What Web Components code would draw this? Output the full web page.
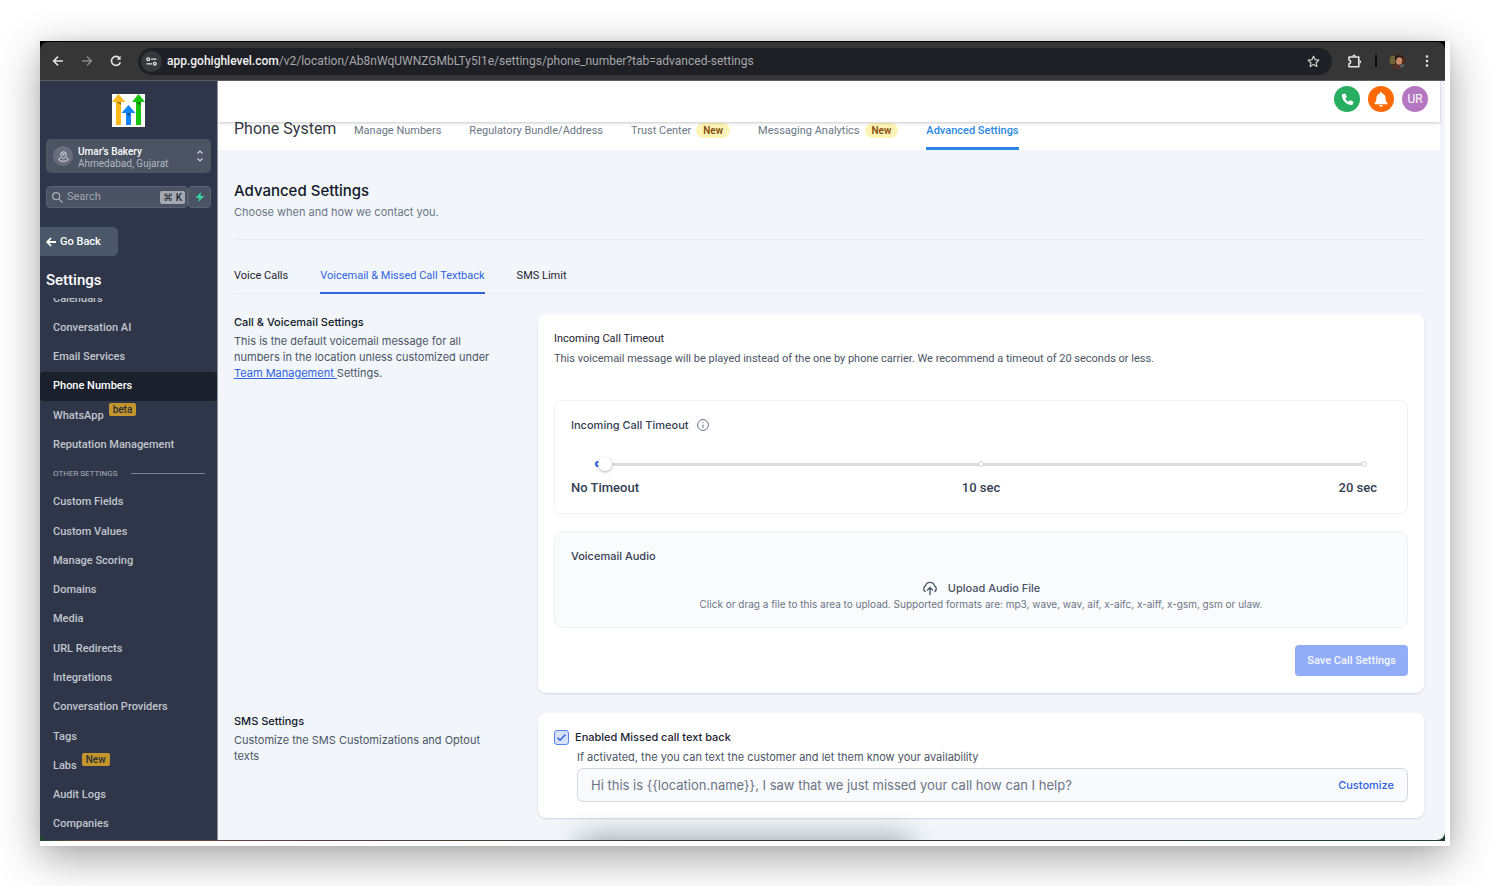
<!DOCTYPE html>
<html lang="en">
<head>
<meta charset="utf-8">
<title>Phone System - Advanced Settings</title>
<style>
  * { box-sizing: border-box; }
  body { margin: 0; min-height: 100vh; display: flex; padding: 41px 40px 40px; background: #fff; font: 400 11px/16px Inter, "Liberation Sans", sans-serif; color: #4b5565; }
</style>
</head>
<body>
<app-window>
  <browser-bar slot="bar"></browser-bar>
  <side-bar slot="side"></side-bar>
  <top-bar></top-bar>
  <page-tabs></page-tabs>
  <settings-page>
    <section-row heading="Call &amp; Voicemail Settings">
      <span slot="about">This is the default voicemail message for all numbers in the location unless customized under <team-link></team-link>Settings.</span>
      <call-settings></call-settings>
    </section-row>
    <section-row heading="SMS Settings">
      <span slot="about">Customize the SMS Customizations and Optout texts</span>
      <textback-settings></textback-settings>
    </section-row>
  </settings-page>
</app-window>

<script>
const reset = '*,*::before,*::after{box-sizing:border-box}h1,h2,h3,p,ul{margin:0;padding:0;font-weight:inherit;font-size:inherit}ul{list-style:none}a{color:inherit;text-decoration:none}button,input{font:inherit;color:inherit;margin:0}button{cursor:pointer}svg{display:block;flex:none}';
const define = (name, css, html) => customElements.define(name, class extends HTMLElement {
  constructor() {
    super();
    const root = this.attachShadow({ mode: 'open' });
    root.innerHTML = `<style>${reset}${css}</style>${typeof html === 'function' ? html(this) : html}`;
  }
});

define('app-window', `
  :host{display:flex;flex:1;min-width:0;padding:0 5px 5px 0;background:#fff;box-shadow:0 12px 40px rgba(0,0,0,.36),0 0 8px rgba(0,0,0,.06)}
  .screen{flex:1;min-width:0;display:flex;flex-direction:column;background:linear-gradient(90deg,#1d4a2c,#6d4a40 3%,#3a3434 45%,#20402c);padding-bottom:1px}
  .body{flex:1;display:flex;min-height:0;overflow:hidden;border-radius:0 0 8px 8px}
  main{position:relative;flex:1;min-width:0;display:flex;flex-direction:column;background:#f2f6fb;overflow:hidden}
  main::after{content:"";position:absolute;left:30%;bottom:-16px;width:26%;height:10px;box-shadow:0 0 28px 8px rgba(20,30,40,.4);border-radius:8px;pointer-events:none}`,
  `<div class="screen"><slot name="bar"></slot><div class="body"><slot name="side"></slot><main><slot></slot></main></div></div>`);

define('browser-bar', `
  :host{display:block;background:#000;padding-top:1px}
  .bar{display:flex;align-items:center;height:39px;padding:0 12px 0 11px;background:#363636;border-bottom:1px solid #5c5c5c;border-radius:8px 8px 0 0;color:#e3e3e3}
  button{border:0;background:none;padding:0;color:inherit;display:grid;place-items:center}
  .nav{display:flex;gap:15px}
  .nav button{width:14px}
  .dim{color:#8b8b8b}
  .pill{flex:1;min-width:0;display:flex;align-items:center;height:27px;margin:0 15px;padding:0 12px 0 3px;border-radius:14px;background:#1f2025;font:400 12px/16px Roboto,sans-serif;color:#a4a7ab}
  .site{width:21px;height:21px;border-radius:50%;background:#37383c;margin-right:5px;color:#e3e3e3}
  .url{flex:1;white-space:nowrap;overflow:hidden}
  b{font-weight:500;color:#f1f1f1}
  .sep{width:2px;height:12px;background:#0c0c0c;margin:0 12px}
  .more{margin-left:15px;width:12px}`,
  `<div class="bar">
    <div class="nav">
    <button aria-label="Back"><svg width="12" height="12" viewBox="0 0 12 12" fill="none" stroke="currentColor" stroke-width="1.6"><path d="M11 6H2M6 1.6 1.6 6 6 10.4"/></svg></button>
    <button aria-label="Forward" class="dim"><svg width="12" height="12" viewBox="0 0 12 12" fill="none" stroke="currentColor" stroke-width="1.4"><path d="M1 6h9M6 1.6 10.400 6 6 10.400"/></svg></button>
    <button aria-label="Reload"><svg width="12" height="12" viewBox="0 0 12 12" fill="none" stroke="currentColor" stroke-width="1.6"><path d="M10.300 7.200A4.500 4.500 0 1 1 9.600 3.200"/><path d="M10.600.8v4H6.600z" fill="currentColor" stroke="none"/></svg></button>
    </div>
    <div class="pill">
      <button class="site" aria-label="Site information"><svg width="11" height="9" viewBox="0 0 11 9" fill="none" stroke="currentColor" stroke-width="1.300"><circle cx="2.200" cy="2.200" r="1.400"/><path d="M5 2.200h5.500M.5 6.800H6"/><circle cx="8.800" cy="6.800" r="1.400"/></svg></button>
      <span class="url"><b>app.gohighlevel.com</b>/v2/location/Ab8nWqUWNZGMbLTy5I1e/settings/phone_number?tab=advanced-settings</span>
      <button aria-label="Bookmark"><svg width="13" height="13" viewBox="0 0 13 13" fill="none" stroke="#d0d0d0" stroke-width="1.200" stroke-linejoin="round"><path d="m6.500 1.200 1.600 3.500 3.800.4-2.800 2.600.8 3.800-3.400-1.900-3.400 1.900.8-3.800L1.100 5.100l3.800-.4z"/></svg></button>
    </div>
    <button aria-label="Extensions"><svg width="16" height="15" viewBox="0 0 16 15" fill="none" stroke="currentColor" stroke-width="1.600" stroke-linejoin="round"><path d="M2 3h9.800v9.800H2v-3c2.200-.3 2.200-3.400 0-3.700z"/><path d="M5.500 2.200a1.600 1.600 0 0 1 3.200 0zM12.600 6.200a1.600 1.600 0 0 1 0 3.200z" fill="currentColor" stroke="none"/></svg></button>
    <span class="sep"></span>
    <button aria-label="Profile"><svg width="17" height="16" viewBox="0 0 17 16"><defs><clipPath id="p"><circle cx="8.500" cy="8" r="8"/></clipPath></defs><g clip-path="url(#p)"><rect width="17" height="16" fill="#3d3226"/><path d="M0 3h6v8H0z" fill="#6f6539"/><path d="M12 2h5v10h-5z" fill="#4a2c1e"/><ellipse cx="10" cy="7.500" rx="3.200" ry="4.200" fill="#c98a63"/><path d="M6 6c0-5 8-5 8 0-2-2-5-2-6-1l-1 3z" fill="#1e1512"/><path d="M3 16c1-4 4-5 7-4l3 4z" fill="#5a2e28"/><path d="M11 12l5-1v5h-4z" fill="#59636b"/></g></svg></button>
    <button class="more" aria-label="Menu"><svg width="4" height="12" viewBox="0 0 4 12" fill="currentColor"><circle cx="2" cy="1.500" r="1.300"/><circle cx="2" cy="6" r="1.300"/><circle cx="2" cy="10.500" r="1.300"/></svg></button>
  </div>`);

const nav = [['Calendars'], ['Conversation AI'], ['Email Services'], ['Phone Numbers', '', 1], ['WhatsApp', 'beta'], ['Reputation Management'], null,
  ['Custom Fields'], ['Custom Values'], ['Manage Scoring'], ['Domains'], ['Media'], ['URL Redirects'], ['Integrations'], ['Conversation Providers'], ['Tags'], ['Labs', 'New'], ['Audit Logs'], ['Companies']];

define('side-bar', `
  :host{display:flex;flex-direction:column;flex:none;width:178px;background:#303649;border-right:1px solid #8d93a0;font-family:Roboto,sans-serif;font-weight:500;color:#c0c5cd;line-height:16px}
  .logo{align-self:center;margin-top:13px}
  .loc{display:flex;align-items:center;gap:5px;height:34px;margin:12px 6px 0;padding:0 7px;border:0;border-radius:5px;background:#4c5464;text-align:left;font-size:10px;line-height:12px}
  .pin{display:grid;place-items:center;width:20px;height:20px;border-radius:50%;background:#686e7b}
  .loc span:nth-child(2){flex:1;padding-top:3px}
  .loc b{display:block;font-weight:500;color:#fff}
  .loc small{display:block;font-size:10px;font-weight:400;color:#b2b8c1}
  .find{display:flex;height:22px;margin:13px 6px 0}
  .find label{flex:1;min-width:0;display:flex;align-items:center;gap:4px;padding:0 2px 0 5px;background:#4a5263;border:1px solid #5a6272;border-radius:4px}
  input{flex:1;min-width:0;width:20px;border:0;padding:0;background:none;outline:0;font-size:11px;font-weight:400}
  input::placeholder{color:#a0a6b0;opacity:1}
  kbd{display:flex;align-items:center;gap:3px;height:13px;padding:0 3px;border-radius:2px;background:#a3a8b1;color:#242a36;font:500 10px/13px Roboto,sans-serif}
  .bolt{width:23px;padding:0;display:grid;place-items:center;background:#4a5263;border:1px solid #5a6272;border-radius:4px}
  .back{align-self:flex-start;display:flex;align-items:center;gap:4px;height:29px;margin-top:19px;padding:0 17px 0 6px;border:0;border-radius:0 5px 5px 0;background:#4a5768;color:#fff;font-size:11px}
  h2{margin:14px 0 0 6px;color:#fff;font-size:15px;line-height:20px;font-weight:500}
  nav{flex:1;display:flex;margin-top:8px;padding-bottom:1px;overflow:hidden}
  ul{flex:1;display:flex;flex-direction:column;margin-top:-14px}
  li{flex:1 0 28px;display:flex}
  li a{flex:1;display:flex;align-items:center;gap:5px;padding-left:13px;border-radius:4px}
  .on a{background:#1a202c;color:#fff}
  .tag{align-self:flex-start;margin-top:2px;height:13px;padding:0 4px;border-radius:2px;background:#c4952c;color:#2b2f38;font-size:10px;line-height:13px}
  .div{flex:0 0 28px;align-items:center;gap:14px;padding:0 12px 0 13px;font-size:8px;font-weight:400;color:#a9afba}
  .div::after{content:"";flex:1;height:1px;background:#7c8391}`,
  `<svg class="logo" width="33" height="33" viewBox="0 0 33 33"><path fill="#fff" d="M0 0h33v33H0z"/><path fill="#fcb81c" d="M4 7h5v24H4zM6.500 0l7 8H0z"/><path fill="#16c60c" d="M24 7h5v24h-5zM26.500 0 33 8H20z"/><path fill="#1585ff" d="M14 18h5v13h-5zM16.500 11l7 8h-14z"/><path d="M4 8h5v3zM24 8h5l-1 4zM14 19h5l-2 4z" opacity=".35"/></svg>
  <button class="loc"><span class="pin"><svg width="11" height="11" viewBox="0 0 11 11" fill="none" stroke="#e6e8ec"><path d="M5.500 7.800C3.600 6 2.800 4.800 2.800 3.500a2.700 2.700 0 0 1 5.400 0c0 1.300-.8 2.500-2.700 4.300z"/><circle cx="5.500" cy="3.500" r=".7"/><path d="M2.800 6.600C-.8 8 1 10.300 5.500 10.300s6.300-2.300 2.700-3.700"/></svg></span><span><b>Umar's Bakery</b><small>Ahmedabad, Gujarat</small></span><svg width="8" height="14" viewBox="0 0 8 14" fill="none" stroke="#d0d4da" stroke-width="1.200"><path d="m1.500 4.500 2.500-2.500 2.500 2.500M1.500 9.500 4 12l2.500-2.500"/></svg></button>
  <div class="find"><label><svg width="11" height="11" viewBox="0 0 11 11" fill="none" stroke="#a7adb7" stroke-width="1.200"><circle cx="4.200" cy="4.200" r="3.500"/><path d="m6.800 6.800 3.700 3.700"/></svg><input type="search" placeholder="Search" aria-label="Search"><kbd><span>⌘</span><span>K</span></kbd></label><button class="bolt" aria-label="Quick actions"><svg width="10" height="10" viewBox="0 0 10 10" fill="#37d39b"><path d="M6 0 .5 6H4l-.6 4L9.300 4H5.700z"/></svg></button></div>
  <button class="back"><svg width="10" height="10" viewBox="0 0 10 10" fill="none" stroke="#fff" stroke-width="1.800"><path d="M10 5H1.500M5 1 1.200 5 5 9"/></svg>Go Back</button>
  <h2>Settings</h2>
  <nav><ul>${nav.map(i => i ? `<li${i[2] ? ' class="on"' : ''}><a href="#">${i[0]}${i[1] ? `<span class="tag">${i[1]}</span>` : ''}</a></li>` : '<li class="div">OTHER SETTINGS</li>').join('')}</ul></nav>`);

define('top-bar', `
  :host{position:relative;z-index:1;display:flex;justify-content:flex-end;align-items:center;gap:8px;height:41px;margin-right:5px;padding:0 12px 5px;background:#fff;box-shadow:0 1px 3px rgba(0,0,0,.22)}
  button{width:26px;height:26px;padding:0;border:0;border-radius:50%;display:grid;place-items:center;color:#fff;font:400 12px/16px Roboto,sans-serif}
  .call{background:#27ae60}.bell{background:#ff6a06}.me{background:#b577c1}`,
  `<button class="call" aria-label="Call"><svg width="13" height="13" viewBox="0 0 13 13" fill="#fff"><path d="M3.200.6 1.500 1.300C.9 1.600.8 2 .9 2.800c.5 4.800 4.300 8.800 9.300 9.300.7.100 1.200-.1 1.400-.7l.8-1.800c.2-.5 0-.9-.4-1.100L9.700 7.400c-.4-.2-.8-.1-1.100.2l-1 1.100C6.200 8 5 6.800 4.300 5.400l1.100-.9c.3-.3.4-.7.3-1.100L4.500 1C4.200.6 3.700.4 3.200.6z"/></svg></button>
  <button class="bell" aria-label="Notifications"><svg width="14" height="15" viewBox="0 0 14 15" fill="#fff"><path d="M7 0c.6 0 1 .4 1 1v.4c2.200.5 3.500 2.200 3.500 4.400 0 3 .7 4 1.700 4.900.6.600.3 1.500-.5 1.500H1.300c-.8 0-1.100-.9-.5-1.500 1-.9 1.700-1.900 1.700-4.900C2.500 3.600 3.800 1.900 6 1.400V1c0-.6.400-1 1-1zM5.200 13h3.600a1.800 1.800 0 0 1-3.600 0z"/></svg></button>
  <button class="me">UR</button>`);

define('page-tabs', `
  :host{display:block;margin-right:5px;padding-left:16px;background:#fff;font-family:Roboto,sans-serif;color:#6b7785}
  div{display:flex;align-items:baseline;height:28px}
  h1{width:120px;font-size:16px;line-height:14px;color:#34393f;white-space:nowrap}
  nav{display:flex;gap:28px;white-space:nowrap}
  a{display:block;padding-bottom:8px;border-bottom:3px solid transparent}
  .on{color:#2b87e3;border-color:#2b87e3;font-weight:500}
  i{display:inline-block;margin-left:5px;padding:0 7px;border-radius:8px;background:#fdf3b4;color:#85500f;font-style:normal;font-weight:600;font-size:10px;line-height:15px}`,
  `<div><h1>Phone System</h1><nav><a href="#">Manage Numbers</a><a href="#">Regulatory Bundle/Address</a><a href="#">Trust Center<i>New</i></a><a href="#">Messaging Analytics<i>New</i></a><a class="on" href="#">Advanced Settings</a></nav></div>`);

define('settings-page', `
  :host{display:block;flex:1;padding:32px 21px 22px 16px}
  h2{font-size:15px;line-height:18px;font-weight:500;color:#101828}
  header{padding-bottom:19px;border-bottom:1px solid #e8ecf1}
  p{margin-top:4px;color:#6b7585}
  nav{display:flex;gap:32px;padding-top:28px;border-bottom:1px solid #e8ecf1;font-family:Roboto,sans-serif;color:#1d2433}
  a{display:block;margin-bottom:-1px;padding-bottom:8px;border-bottom:2px solid transparent}
  .on{color:#2f63e0;border-color:#2f63e0}
  .rows{display:grid;gap:20px;margin-top:20px}`,
  `<header><h2>Advanced Settings</h2><p>Choose when and how we contact you.</p></header>
  <nav><a href="#">Voice Calls</a><a class="on" href="#">Voicemail &amp; Missed Call Textback</a><a href="#">SMS Limit</a></nav>
  <div class="rows"><slot></slot></div>`);

define('section-row', `
  :host{display:grid;grid-template-columns:272px minmax(0,1fr);column-gap:32px;align-items:start}
  h3{color:#101828;font-weight:500}
  p{margin-top:3px}
  .card{padding:16px;border-radius:8px;background:#fff;box-shadow:0 1px 2px rgba(16,24,40,.14)}`,
  el => `<div><h3>${el.getAttribute('heading').replace('&', '&amp;')}</h3><p><slot name="about"></slot></p></div><div class="card"><slot></slot></div>`);

define('team-link', `:host{display:inline}a{color:#2f63e0;text-decoration:underline;white-space:pre}`, `<a href="#">Team Management </a>`);

define('call-settings', `
  :host{display:flex;flex-direction:column}
  .head{padding-top:1px;font-family:Roboto,sans-serif}
  h3{color:#1d2433}
  .head p{margin-top:4px}
  timeout-slider{margin-top:33px}
  audio-upload{margin-top:17px}
  button{align-self:flex-end;height:31px;margin:17px 0 1px;padding:0 12px;border:0;border-radius:4px;background:#92adf8;color:#f4f7ff;font:500 11px/16px Roboto,sans-serif}`,
  `<div class="head"><h3>Incoming Call Timeout</h3><p>This voicemail message will be played instead of the one by phone carrier. We recommend a timeout of 20 seconds or less.</p></div>
  <timeout-slider></timeout-slider><audio-upload></audio-upload><button>Save Call Settings</button>`);

define('timeout-slider', `
  :host{display:block;padding:16px;border:1px solid #f0f1f3;border-radius:8px;font-weight:500;color:#344054}
  .title{display:flex;align-items:center;gap:8px}
  .slide{display:grid;align-items:center;margin:24px 24px 0}
  .slide>*{grid-area:1/1}
  .line{height:3px;margin:0 3px;background:#dcdcdf}
  .dots{display:flex;justify-content:space-between}
  .dots span{width:6px;height:6px;border-radius:50%;border:1px solid #d2d3d7;background:#fff}
  .dots span:first-child{border:2px solid #2f63e0}
  input{appearance:none;width:calc(100% - 3px);height:14px;margin-left:3px;background:none;outline:0}
  input::-webkit-slider-thumb{appearance:none;width:14px;height:14px;border-radius:50%;background:#fff;box-shadow:0 1px 3px rgba(0,0,0,.3)}
  .marks{display:grid;grid-template-columns:1fr 1fr 1fr;margin-top:8px;font:500 13px/18px Roboto,sans-serif}
  .marks span:nth-child(2){text-align:center}
  .marks span:last-child{text-align:right;padding-right:14px}`,
  `<div class="title"><label for="t">Incoming Call Timeout</label><svg width="12" height="12" viewBox="0 0 12 12" fill="none" stroke="#667085"><circle cx="6" cy="6" r="5.400"/><path d="M6 5.500V9M6 3.200v1.100"/></svg></div>
  <div class="slide"><span class="line"></span><div class="dots"><span></span><span></span><span></span></div><input id="t" type="range" min="0" max="20" value="0"></div>
  <div class="marks"><span>No Timeout</span><span>10 sec</span><span>20 sec</span></div>`);

define('audio-upload', `
  :host{display:block;padding:16px;border:1px solid #f0f1f3;border-radius:8px;background:#fafbfc;text-align:center}
  h3{text-align:left;color:#344054;font-weight:500}
  button{display:flex;gap:10px;margin:16px auto 0;padding:0;border:0;background:none;font-weight:500;color:#475467}
  p{margin-top:1px;font-size:10px;line-height:14px;color:#6b7585}`,
  `<h3>Voicemail Audio</h3><button><svg width="16" height="16" viewBox="0 0 16 16" fill="none" stroke="currentColor" stroke-width="1.300" stroke-linecap="round" stroke-linejoin="round"><path d="M3.200 11.500A3.300 3.300 0 0 1 3.500 5.800a4.700 4.700 0 0 1 9 0 3.300 3.300 0 0 1 .3 5.700"/><path d="m5.500 10 2.500-2.500 2.500 2.500M8 7.500V14.500"/></svg>Upload Audio File</button>
  <p>Click or drag a file to this area to upload. Supported formats are: mp3, wave, wav, aif, x-aifc, x-aiff, x-gsm, gsm or ulaw.</p>`);

define('textback-settings', `
  :host{display:block}
  .check{display:flex;align-items:center;gap:6px}
  .check input{appearance:none;width:15px;height:15px;border:1px solid #5b84ea;border-radius:3px;background:#d6e2fd url("data:image/svg+xml,%3Csvg xmlns='http://www.w3.org/2000/svg' viewBox='0 0 13 13' fill='none' stroke='%232f63e0' stroke-width='1.500'%3E%3Cpath d='m2.500 6.800 2.500 2.400 5.500-5.700'/%3E%3C/svg%3E")}
  .check label{font-weight:500;color:#1d2433}
  p{margin:4px 0 3px 23px}
  .msg{display:flex;align-items:center;height:34px;margin-left:23px;padding:0 13px;border:1px solid #d3d8e0;border-radius:6px;background:#f9fafc}
  .msg input{flex:1;min-width:0;border:0;padding:0;background:none;outline:0;font-size:13px;line-height:18px;color:#6b7585}
  a{color:#2f63e0;font-weight:500}`,
  `<div class="check"><input id="c" type="checkbox" checked><label for="c">Enabled Missed call text back</label></div>
  <p>If activated, the you can text the customer and let them know your availability</p>
  <div class="msg"><input type="text" readonly aria-label="Text back message" value="Hi this is {{location.name}}, I saw that we just missed your call how can I help?"><a href="#">Customize</a></div>`);
</script>
</body>
</html>
